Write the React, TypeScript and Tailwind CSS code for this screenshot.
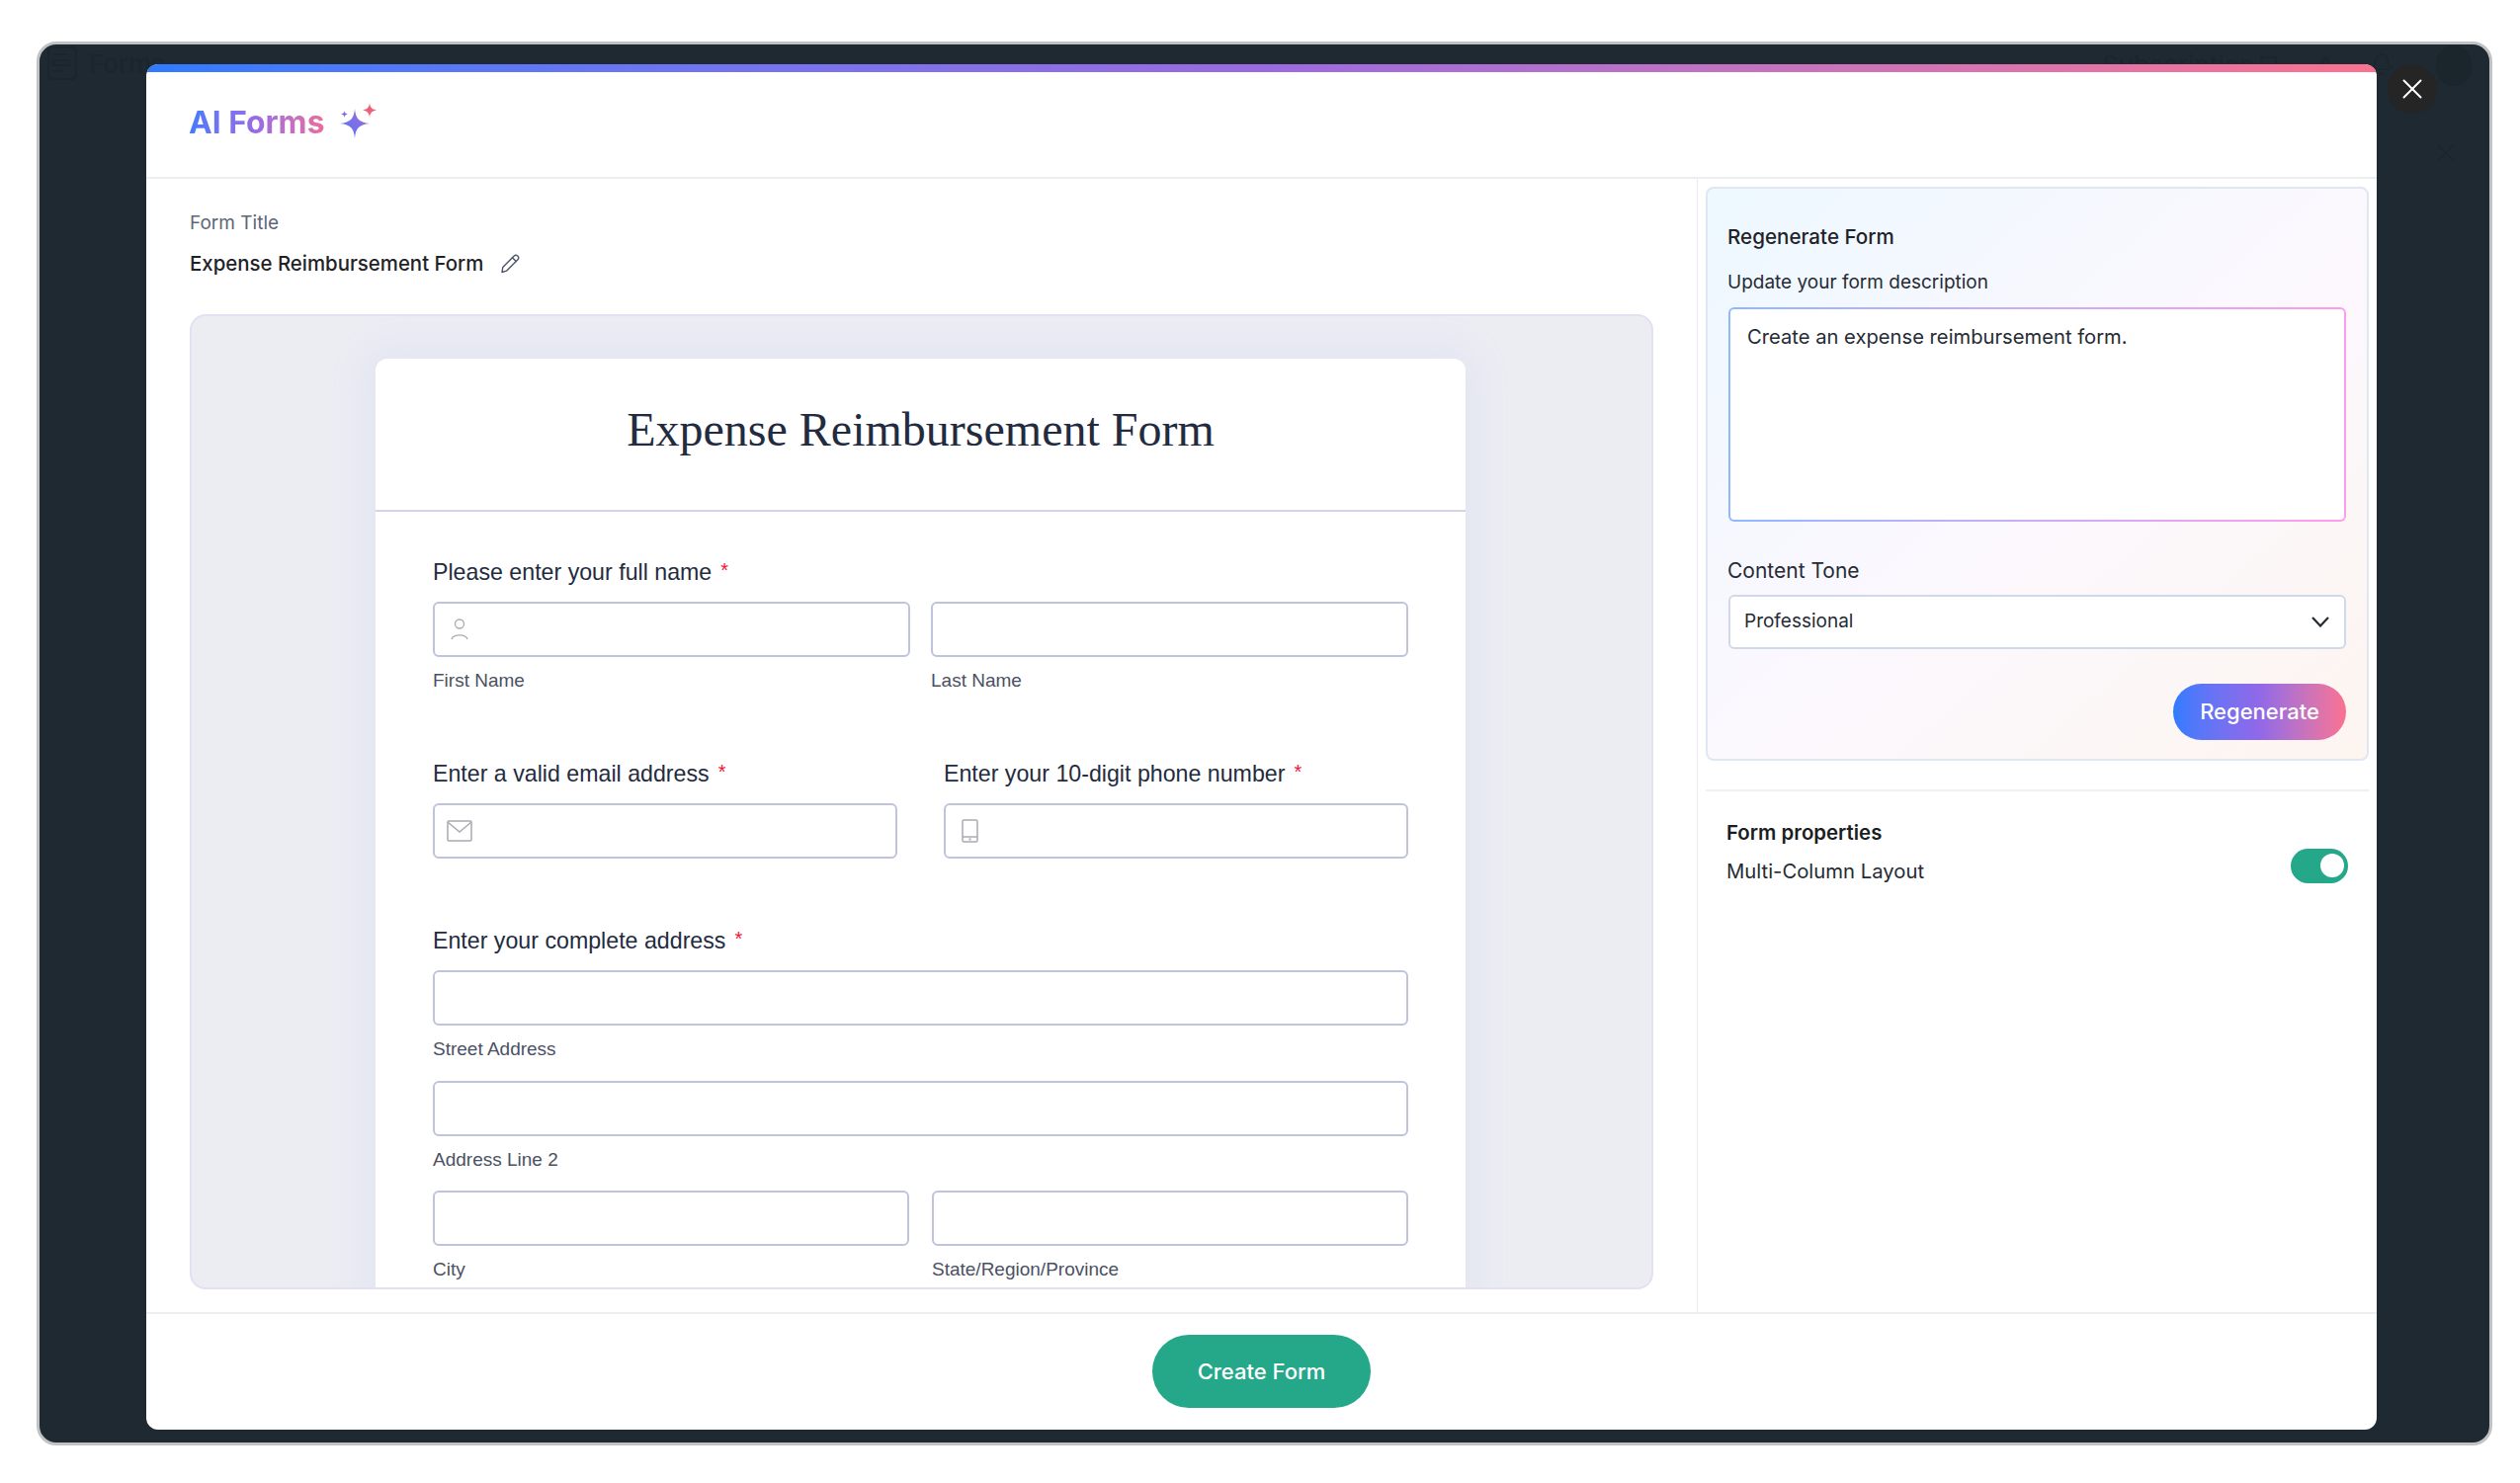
import { X, Bell } from "lucide-react";

const inter = "font-['Inter',sans-serif]";

function Sub({ children }: { children: string }) {
  return <div className="mt-[12px] text-[19px] leading-[24px] text-[#4b5163]">{children}</div>;
}

function Label({ children }: { children: string }) {
  return (
    <div className="mb-[16px] flex h-[28px] items-center text-[23.2px] leading-[28px] text-[#232b3e]">
      {children}
      <span className="ml-[9px] -translate-y-[2px] text-[20px] text-[#f5143c]">*</span>
    </div>
  );
}

function Field({ children }: { children?: React.ReactNode }) {
  return (
    <div className="flex h-[56px] w-full items-center rounded-[6px] border-2 border-[#c0c3dc] bg-white">
      {children}
    </div>
  );
}

function Sparkles() {
  return (
    <svg width="37" height="36" viewBox="0 0 37 36">
      <defs>
        <linearGradient id="sp" x1="0" y1="1" x2="1" y2="0">
          <stop offset="0" stopColor="#4f78f5" />
          <stop offset="1" stopColor="#a868d8" />
        </linearGradient>
      </defs>
      <path d="M15 6 C15.8 15.5 19 20 30 21 C19 22 15.8 26.5 15 36 C14.2 26.5 11 22 0 21 C11 20 14.2 15.5 15 6Z" fill="url(#sp)" />
      <path d="M30 0 C30.4 4.5 32 6.6 37 7.5 C32 8.4 30.4 10.5 30 15 C29.6 10.5 28 8.4 23 7.5 C28 6.6 29.6 4.5 30 0Z" fill="#ee5f7c" />
      <path d="M4.5 8 C4.7 10 5.4 10.8 8 11.5 C5.4 12.2 4.7 13 4.5 15 C4.3 13 3.6 12.2 1 11.5 C3.6 10.8 4.3 10 4.5 8Z" fill="#7a6fe8" />
    </svg>
  );
}

export default function App() {
  return (
    <div className={`flex h-[1501px] w-[2550px] bg-white pb-[38px] pl-[37px] pr-[28px] pt-[42px] ${inter}`}>
      <div className="relative flex h-full w-full rounded-[20px] border-[3px] border-[#c0c2c3] bg-[#1e2931] pb-[13px] pl-[108px] pr-[114px] pt-[20px]">
        {/* dimmed page behind the overlay */}
        <svg className="absolute left-[8px] top-[2px]" width="30" height="34" viewBox="0 0 30 34" fill="none" stroke="#1a252c" strokeWidth="2">
          <rect x="1" y="1" width="28" height="32" rx="4" />
          <path d="M6 8 H22 M6 14 H22 V19 H6 Z M6 25 H16" />
        </svg>
        <div className="absolute left-[50px] top-[4px] text-[26px] leading-[32px] text-[#1a252c]">Forms</div>
        <div className="absolute left-[2087px] top-[5px] text-[26px] leading-[32px] text-[#1a252c]">Subscription</div>
        <div className="absolute left-[2247px] top-[12px] h-[30px] w-[17px] rounded-[3px] border-2 border-[#1a252c]" />
        <div className="absolute left-[2305px] top-[8px] text-[24px] leading-[28px] text-[#1a252c]">A</div>
        <Bell className="absolute left-[2358px] top-[8px] h-[24px] w-[24px] text-[#1a252c]" strokeWidth={1.5} />
        <div className="absolute left-[2425px] top-[1px] h-[41px] w-[36px] rounded-full bg-[#1a252c]" />
        <X className="absolute left-[2420px] top-[95px] h-[30px] w-[30px] text-[#1a252c]" strokeWidth={1.2} />

        <button className="absolute left-[2376px] top-[20px] z-20 flex h-[50px] w-[50px] items-center justify-center rounded-full bg-[#252525] text-white">
          <X className="h-[34px] w-[34px]" strokeWidth={1.4} />
        </button>

        <div className="relative z-10 flex w-full flex-col overflow-hidden rounded-[12px] bg-white">
          <div className="h-[8px] w-full shrink-0 bg-gradient-to-r from-[#2e7bff] via-[#9a6ae0] to-[#fb7290]" />
          {/* header */}
          <div className="flex h-[108px] shrink-0 items-start border-b-2 border-[#eceef1] pl-[43px] pt-[32px]">
            <span className="bg-gradient-to-r from-[#3f7bfb] via-[#9a6ae6] to-[#ea6c9c] bg-clip-text text-[31.8px] font-bold leading-[38px] text-transparent">
              AI Forms
            </span>
            <span className="-mt-[1px] ml-[16px]">
              <Sparkles />
            </span>
          </div>

          {/* body */}
          <div className="flex min-h-0 flex-1">
            <div className="flex w-[1570px] shrink-0 flex-col border-r border-[#e9ebf2] pl-[44px]">
              <div className="mt-[33px] text-[19px] leading-[24px] text-[#5d6678]">Form Title</div>
              <div className="mt-[16px] flex items-center text-[20.4px] font-medium leading-[26px] text-[#1f2328]">
                Expense Reimbursement Form
                <svg className="ml-[16px]" width="22" height="22" viewBox="0 0 22 22" fill="none" stroke="#4b5468" strokeWidth="1.4" strokeLinejoin="round" strokeLinecap="round">
                  <path d="M3 19.5 L3.8 14.5 L15.5 2.8 a2 2 0 0 1 2.9 0 l.8 .8 a2 2 0 0 1 0 2.9 L7.5 18.2 Z" />
                  <path d="M13.5 4.8 L17.2 8.5" />
                </svg>
              </div>

              {/* preview */}
              <div className="mt-[38px] flex h-[987px] w-[1481px] justify-center overflow-hidden rounded-[16px] border-2 border-[#e4e0f1] bg-[#ecedf3] pr-[2px] pt-[43px]">
                <div className="h-[1100px] w-[1103px] shrink-0 rounded-t-[12px] bg-white font-['Liberation_Sans',sans-serif] shadow-[0_0_36px_12px_#e2e5f1]">
                  <div className="flex h-[155px] items-start justify-center border-b-2 border-[#d4d4e6] pt-[42px] font-['Liberation_Serif',serif] text-[48px] leading-[60px] text-[#232b3e]">
                    Expense Reimbursement Form
                  </div>
                  <div className="px-[58px] pt-[47px]">
                    <Label>Please enter your full name</Label>
                    <div className="flex gap-[21px]">
                      <div className="flex-1">
                        <Field>
                          <svg className="ml-[16px]" width="18" height="24" viewBox="0 0 18 24" fill="none" stroke="#a9abb2" strokeWidth="1.3">
                            <circle cx="9" cy="6.5" r="4.5" />
                            <path d="M1 22 C2.5 16.5 15.5 16.5 17 22" />
                          </svg>
                        </Field>
                        <Sub>First Name</Sub>
                      </div>
                      <div className="flex-1">
                        <Field />
                        <Sub>Last Name</Sub>
                      </div>
                    </div>

                    <div className="mt-[68px] flex gap-[47px]">
                      <div className="flex-1">
                        <Label>Enter a valid email address</Label>
                        <Field>
                          <svg className="ml-[12px]" width="26" height="22" viewBox="0 0 26 22" fill="none" stroke="#a9abb2" strokeWidth="1.5">
                            <rect x="1" y="1" width="24" height="20" rx="1" />
                            <path d="M1 2 L13 12 L25 2" />
                          </svg>
                        </Field>
                      </div>
                      <div className="flex-1">
                        <Label>Enter your 10-digit phone number</Label>
                        <Field>
                          <svg className="ml-[16px]" width="17" height="24" viewBox="0 0 17 24" fill="none" stroke="#a9abb2" strokeWidth="1.5">
                            <rect x="1" y="1" width="15" height="22" rx="1.5" />
                            <path d="M1 18 H16" />
                            <circle cx="8.5" cy="20.5" r="0.4" />
                          </svg>
                        </Field>
                      </div>
                    </div>

                    <div className="mt-[69px]">
                      <Label>Enter your complete address</Label>
                      <Field />
                      <Sub>Street Address</Sub>
                    </div>
                    <div className="mt-[20px]">
                      <Field />
                      <Sub>Address Line 2</Sub>
                    </div>
                    <div className="mt-[19px] flex gap-[23px]">
                      <div className="flex-1">
                        <Field />
                        <Sub>City</Sub>
                      </div>
                      <div className="flex-1">
                        <Field />
                        <Sub>State/Region/Province</Sub>
                      </div>
                    </div>
                  </div>
                </div>
              </div>
            </div>

            {/* right column */}
            <div className="flex-1 pl-[8px] pt-[8px]">
              <div className="h-[581px] w-[671px] rounded-[8px] border-2 border-[#dfe7f3] bg-gradient-to-br from-[#edf8ff] via-[#fbf8fe] to-[#fdf5f0] pl-[20px] pr-[21px] pt-[35px]">
                <div className="text-[20.6px] font-medium leading-[28px] text-[#1f2328]">Regenerate Form</div>
                <div className="mt-[18px] text-[19px] leading-[28px] text-[#262b33]">Update your form description</div>
                <div className="ml-[1px] mt-[11px] h-[217px] w-[625px] rounded-[6px] bg-gradient-to-r from-[#8fb8ff] to-[#ff9ceb] p-[2px]">
                  <div className="h-full w-full rounded-[4px] bg-white px-[17px] pt-[14px] text-[20.2px] leading-[28px] text-[#262b33]">
                    Create an expense reimbursement form.
                  </div>
                </div>
                <div className="mt-[36px] text-[21px] leading-[28px] text-[#262b33]">Content Tone</div>
                <div className="ml-[1px] mt-[10px] flex h-[55px] w-[625px] items-center justify-between rounded-[6px] border-2 border-[#d0d9e8] bg-white pl-[14px] pr-[15px] text-[19px] text-[#262b33]">
                  Professional
                  <svg width="18" height="11" viewBox="0 0 18 11" fill="none" stroke="#262b33" strokeWidth="2.2">
                    <path d="M1 1 L9 9.5 L17 1" />
                  </svg>
                </div>
                <div className="ml-[1px] mt-[35px] flex w-[625px] justify-end">
                  <button className="flex h-[57px] w-[175px] items-center justify-center rounded-full bg-gradient-to-r from-[#2f7bff] via-[#9068e8] to-[#fb7190] text-[22px] font-medium text-white">
                    Regenerate
                  </button>
                </div>
              </div>
              <div className="mt-[29px] h-[2px] w-[671px] bg-[#eaf0f6]" />
              <div className="flex w-[650px] items-center justify-between pl-[21px] pt-[28px]">
                <div>
                  <div className="text-[20.4px] font-semibold leading-[28px] text-[#1a1d21]">Form properties</div>
                  <div className="mt-[11px] text-[20.3px] leading-[28px] text-[#262b33]">Multi-Column Layout</div>
                </div>
                <div className="mt-[27px] flex h-[35px] w-[58px] items-center justify-end rounded-full bg-[#25a88a] pr-[4px]">
                  <div className="h-[24px] w-[24px] rounded-full bg-white" />
                </div>
              </div>
            </div>
          </div>

          {/* footer */}
          <div className="flex h-[119px] shrink-0 items-center justify-center border-t-2 border-[#eceef1] pb-[1px]">
            <button className="flex h-[74px] w-[221px] items-center justify-center rounded-full bg-[#25a88a] text-[22px] font-medium text-white">
              Create Form
            </button>
          </div>
        </div>
      </div>
    </div>
  );
}
